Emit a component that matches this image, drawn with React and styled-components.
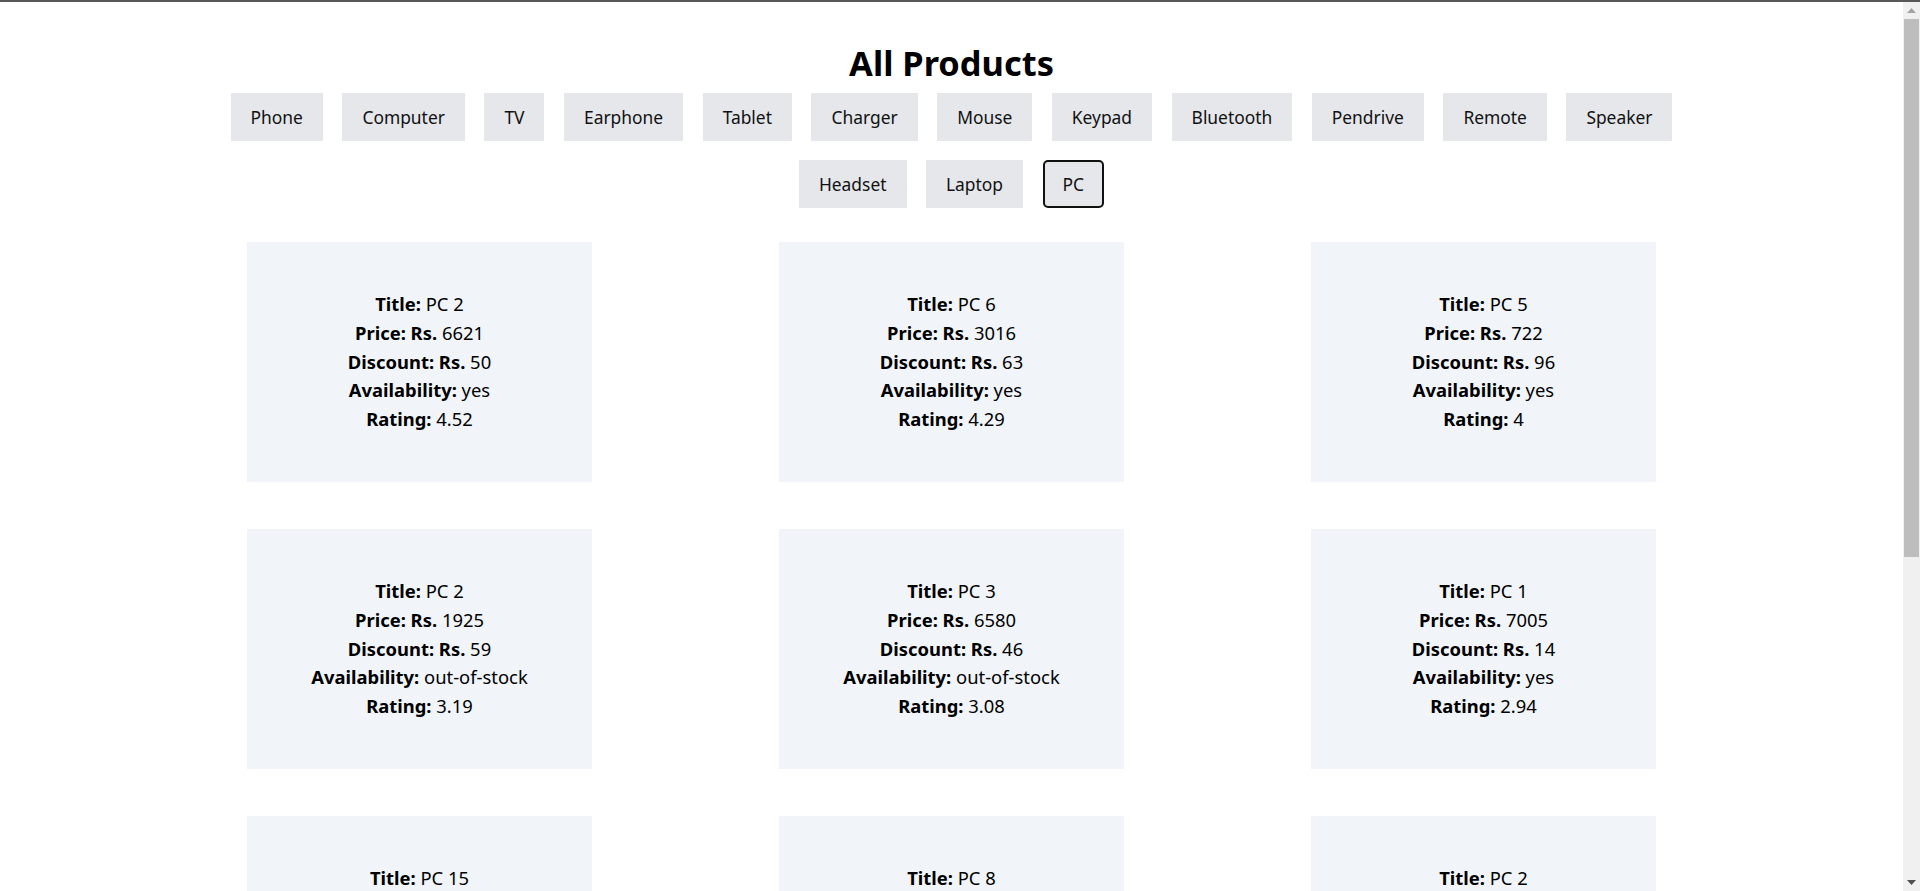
import React, { useState } from "react";
import styled, { createGlobalStyle } from "styled-components";

const GlobalStyle = createGlobalStyle`
  html, body {
    margin: 0;
    padding: 0;
    background: #ffffff;
  }
  body {
    font-family: "Noto Sans", "Open Sans", Arial, sans-serif;
    color: #000000;
    border-top: 2px solid #575757;
  }
`;

const Shell = styled.div`
  display: flex;
  align-items: flex-start;
`;

const Page = styled.main`
  flex: 1;
  min-width: 0;
  padding: 41px 0 88px;
`;

const ScrollRail = styled.aside`
  position: sticky;
  top: 0;
  width: 17px;
  height: calc(100vh - 2px);
  flex-shrink: 0;
  background: #f0f0f0;
  display: flex;
  flex-direction: column;
  align-items: center;
`;

const ArrowBox = styled.div`
  width: 17px;
  height: 17px;
  display: flex;
  align-items: center;
  justify-content: center;
  flex-shrink: 0;
`;

const Thumb = styled.div`
  width: 15px;
  height: 538px;
  background: #bdbdbd;
`;

const Spacer = styled.div`
  flex: 1;
`;

const Heading = styled.h1`
  margin: 0;
  font-size: 34.4px;
  line-height: 40px;
  font-weight: 700;
  text-align: center;
`;

const FilterBar = styled.div`
  max-width: 1540px;
  margin: 0 auto;
  padding: 10px 0;
  display: flex;
  flex-wrap: wrap;
  justify-content: center;
  gap: 19px 19.5px;
`;

const FilterButton = styled.button`
  font-family: inherit;
  font-size: 17.4px;
  line-height: 28px;
  color: #111111;
  background: #e5e7eb;
  padding: 8px 18px;
  border: 2px solid ${(p) => (p.$active ? "#111111" : "transparent")};
  border-radius: ${(p) => (p.$active ? "5px" : "0")};
  cursor: pointer;
`;

const Grid = styled.section`
  margin-top: 24px;
  display: grid;
  grid-template-columns: repeat(3, 345px);
  column-gap: 187px;
  row-gap: 47px;
  justify-content: center;
`;

const Card = styled.article`
  background: #f1f5f9;
  height: 240px;
  display: flex;
  flex-direction: column;
  justify-content: center;
  align-items: center;
  font-size: 18.4px;
  line-height: 28.8px;
`;

const Line = styled.div`
  text-align: center;
  white-space: nowrap;
`;

const Label = styled.span`
  font-weight: 700;
`;

const categories = [
  "Phone", "Computer", "TV", "Earphone", "Tablet", "Charger", "Mouse",
  "Keypad", "Bluetooth", "Pendrive", "Remote", "Speaker", "Headset",
  "Laptop", "PC",
];

const products = [
  { title: "PC 2", price: 6621, discount: 50, availability: "yes", rating: 4.52 },
  { title: "PC 6", price: 3016, discount: 63, availability: "yes", rating: 4.29 },
  { title: "PC 5", price: 722, discount: 96, availability: "yes", rating: 4 },
  { title: "PC 2", price: 1925, discount: 59, availability: "out-of-stock", rating: 3.19 },
  { title: "PC 3", price: 6580, discount: 46, availability: "out-of-stock", rating: 3.08 },
  { title: "PC 1", price: 7005, discount: 14, availability: "yes", rating: 2.94 },
  { title: "PC 15", price: 4312, discount: 27, availability: "yes", rating: 2.71 },
  { title: "PC 8", price: 5540, discount: 81, availability: "out-of-stock", rating: 2.35 },
  { title: "PC 2", price: 2209, discount: 33, availability: "yes", rating: 1.98 },
  { title: "PC 11", price: 890, discount: 72, availability: "yes", rating: 1.62 },
  { title: "PC 4", price: 6034, discount: 18, availability: "out-of-stock", rating: 1.27 },
  { title: "PC 9", price: 3348, discount: 55, availability: "yes", rating: 0.84 },
];

function Arrow({ up, color }) {
  return (
    <svg width="9" height="5" viewBox="0 0 9 5">
      <path d={up ? "M0 5 L4.5 0 L9 5 Z" : "M0 0 L4.5 5 L9 0 Z"} fill={color} />
    </svg>
  );
}

export default function App() {
  const [active, setActive] = useState("PC");
  return (
    <>
      <GlobalStyle />
      <Shell>
        <Page>
          <Heading>All Products</Heading>
          <FilterBar>
            {categories.map((c) => (
              <FilterButton key={c} $active={c === active} onClick={() => setActive(c)}>
                {c}
              </FilterButton>
            ))}
          </FilterBar>
          <Grid>
            {products.map((p, i) => (
              <Card key={i}>
                <Line><Label>Title:</Label> {p.title}</Line>
                <Line><Label>Price: Rs.</Label> {p.price}</Line>
                <Line><Label>Discount: Rs.</Label> {p.discount}</Line>
                <Line><Label>Availability:</Label> {p.availability}</Line>
                <Line><Label>Rating:</Label> {p.rating}</Line>
              </Card>
            ))}
          </Grid>
        </Page>
        <ScrollRail>
          <ArrowBox><Arrow up color="#a3a3a3" /></ArrowBox>
          <Thumb />
          <Spacer />
          <ArrowBox><Arrow color="#505050" /></ArrowBox>
        </ScrollRail>
      </Shell>
    </>
  );
}
